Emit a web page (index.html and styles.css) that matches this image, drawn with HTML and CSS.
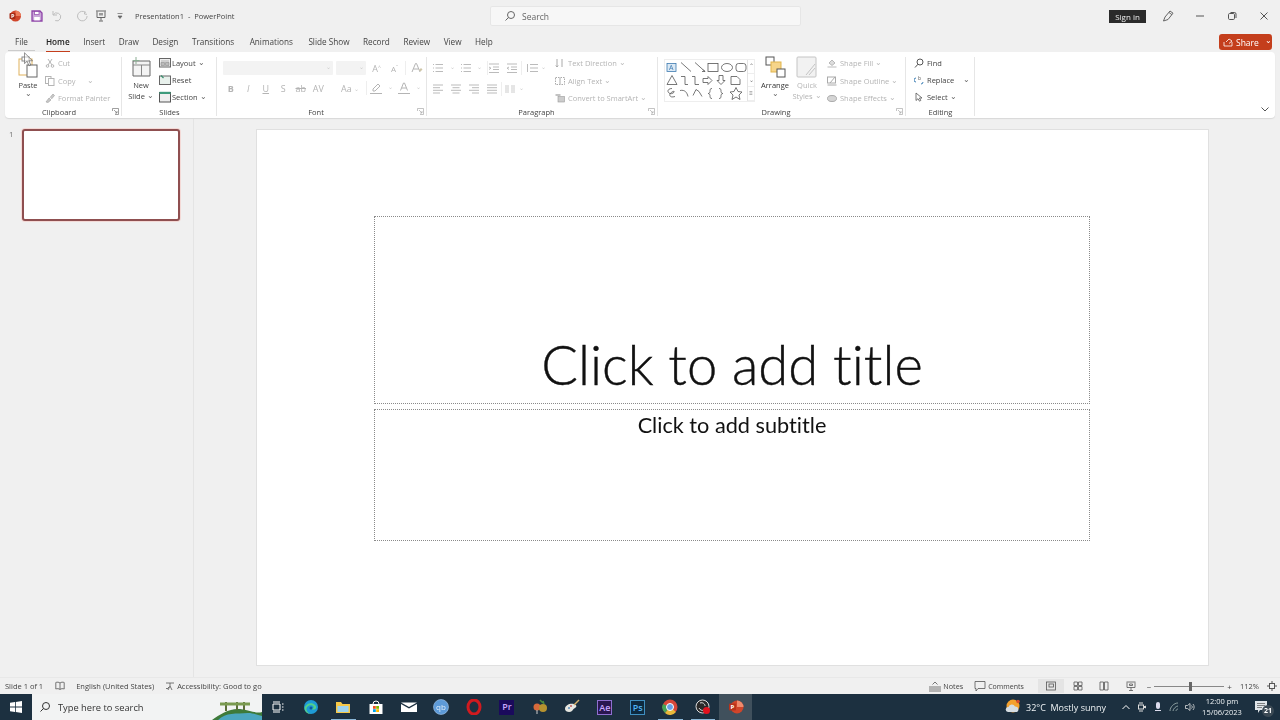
FILE: index.html
```html
<!DOCTYPE html>
<html lang="en">
<head>
<meta charset="utf-8">
<title>Presentation1 - PowerPoint</title>
<link rel="stylesheet" href="styles.css">
</head>
<body>
<div class="app">
<svg class="cursor" viewBox="0 0 10 16"><path d="M.5.5v12l3-2.500 2 5 2-.8-2-4.800h4z" fill="#fff" fill-opacity=".5" stroke="#666" stroke-width=".8"/></svg>
<header class="titlebar">
  <div class="qat">
    <svg class="ic14 q-logo" viewBox="0 0 14 14"><circle cx="7.5" cy="7" r="5.5" fill="#d0452a"/><path d="M7.5 1.5a5.5 5.5 0 0 1 5.5 5.5H7.5z" fill="#ed7d5a"/><rect x="1.5" y="4" width="6" height="6" rx="1" fill="#a62b14"/><text x="2.9" y="9" font-size="5.5" fill="#fff" font-family="Open Sans" font-weight="700">P</text></svg>
    <svg class="ic14 q-save" viewBox="0 0 14 14"><path d="M2 2h8l2 2v8H2z" fill="#c9a6d8" stroke="#8e44a8" stroke-width="1.3"/><rect x="4.5" y="2.6" width="4.5" height="3" fill="#fff" stroke="#8e44a8" stroke-width=".7"/><rect x="4.2" y="8" width="5.6" height="3.4" fill="#fff"/></svg>
    <svg class="ic14 q-undo" viewBox="0 0 14 14"><path d="M3 2v4h4M3.2 6a4 4 0 1 1 2 5.6" fill="none" stroke="#bdbdbd" stroke-width="1"/></svg>
    <svg class="ic14 q-redo" viewBox="0 0 14 14"><path d="M10 2.4 9.4 5l2.6.3M10.6 3.6a4.8 4.8 0 1 0 1.5 3.4" fill="none" stroke="#bdbdbd" stroke-width="1"/></svg>
    <svg class="ic14 q-pres" viewBox="0 0 14 14"><path d="M2 2h10M3 2.500v6h8v-6M7 8.500v3M5 12h4" fill="none" stroke="#666" stroke-width="1"/><rect x="5" y="4" width="4" height="2.500" fill="#999"/></svg>
    <svg class="ic8 q-more" viewBox="0 0 8 8"><path d="M1.500 1.500h5M2 4h4l-2 2.500z" fill="#666" stroke="#666" stroke-width=".7"/></svg>
    <span class="doc-title">Presentation1 &nbsp;-&nbsp; PowerPoint</span>
  </div>
  <div class="searchbox">
    <svg class="ic12" viewBox="0 0 12 12"><circle cx="7" cy="5" r="3.500" fill="none" stroke="#666"/><path d="M4.500 7.500 1.500 10.500" stroke="#666"/></svg>
    <span>Search</span>
  </div>
  <div class="win">
    <span class="signin">Sign in</span>
    <svg class="ic14 w-pen" viewBox="0 0 14 14"><path d="M2.500 12 4 8l5-6 3 2.200-5 6.300z" fill="none" stroke="#555" stroke-width=".9"/><path d="M8 3.500l3 2.200" stroke="#555" stroke-width=".8"/></svg>
    <svg class="ic10 w-btn" viewBox="0 0 10 10"><path d="M1 5h8" stroke="#555"/></svg>
    <svg class="ic10 w-btn" viewBox="0 0 10 10"><rect x="1.500" y="2.500" width="6" height="6" rx="1.200" fill="none" stroke="#555"/><path d="M3.500 1.500h4a1.500 1.500 0 0 1 1.500 1.500v4" fill="none" stroke="#555"/></svg>
    <svg class="ic10 w-btn" viewBox="0 0 10 10"><path d="M1.500 1.500l7 7m0-7l-7 7" stroke="#555"/></svg>
  </div>
</header>

<nav class="tabs">
  <span class="tab t-file">File</span>
  <span class="tab active">Home</span>
  <span class="tab">Insert</span>
  <span class="tab">Draw</span>
  <span class="tab">Design</span>
  <span class="tab wide">Transitions</span>
  <span class="tab wide">Animations</span>
  <span class="tab">Slide Show</span>
  <span class="tab">Record</span>
  <span class="tab">Review</span>
  <span class="tab">View</span>
  <span class="tab">Help</span>
  <div class="share">
    <svg class="ic10" viewBox="0 0 10 10"><path d="M1 5v4h8V5M3 5l3-3 3 2-3 2.500" fill="none" stroke="#fff" stroke-width=".8"/></svg>
    <span>Share</span><span class="share-c">⌄</span>
  </div>
</nav>

<section class="ribbon">
  <div class="grp g-clip">
    <div class="gbody clip-body">
      <div class="big paste">
        <svg class="ic22" viewBox="0 0 22 22"><rect x="2" y="3" width="13" height="16" fill="#fff" stroke="#e0b25c"/><rect x="5" y="1" width="7" height="4" fill="#fff" stroke="#8a8a8a"/><rect x="10" y="9" width="10" height="12" fill="#fff" stroke="#666"/></svg>
        <span>Paste</span><span class="chev">⌄</span>
      </div>
      <div class="stack dis">
        <div class="row"><svg class="ic10" viewBox="0 0 10 10"><path d="M3 1l4 6M7 1 3 7" stroke="#b5b5b5"/><circle cx="2.500" cy="8" r="1.300" fill="none" stroke="#b5b5b5"/><circle cx="7.500" cy="8" r="1.300" fill="none" stroke="#b5b5b5"/></svg><span>Cut</span></div>
        <div class="row"><svg class="ic10" viewBox="0 0 10 10"><rect x=".5" y=".5" width="5.500" height="7" fill="none" stroke="#b5b5b5"/><rect x="3.500" y="2.500" width="5.500" height="7" fill="#fff" stroke="#b5b5b5"/></svg><span>Copy</span><span class="chev mid">⌄</span></div>
        <div class="row"><svg class="ic10" viewBox="0 0 10 10"><path d="M1 9 4 5l2 2-3 2.500zM5 4.500 8 1l1.500 1.500L6.500 6" fill="#c8c8c8" stroke="#a8a8a8" stroke-width=".7"/></svg><span>Format Painter</span></div>
      </div>
    </div>
    <div class="glabel">Clipboard</div>
    <svg class="launch" viewBox="0 0 7 7"><path d="M.5 3V.5h6v6H3M2 2l3 3M5 3v2H3" fill="none" stroke="#777" stroke-width=".7"/></svg>
  </div>

  <div class="grp g-slides">
    <div class="gbody slides-body">
      <div class="big newslide">
        <svg class="ic22" viewBox="0 0 22 22"><path d="M3 5h17v15H3z" fill="#f4f4f4" stroke="#666"/><path d="M3 9h17M11.500 9v11" stroke="#888"/><path d="M6 1v7M2.500 4.500h7" stroke="#8cae94"/></svg>
        <span>New</span><span>Slide <i class="chev">⌄</i></span>
      </div>
      <div class="stack">
        <div class="row"><svg class="ic12" viewBox="0 0 12 12"><rect x=".5" y="1.500" width="11" height="8.500" fill="#eee" stroke="#666"/><path d="M2 4h8M2 5.500h3.500v3H2zM6.500 5.500H10v3H6.500z" fill="#bbb" stroke="#888" stroke-width=".6"/></svg><span>Layout <i class="chev">⌄</i></span></div>
        <div class="row"><svg class="ic12" viewBox="0 0 12 12"><rect x=".5" y="2" width="11" height="8.500" fill="#e8f1ec" stroke="#666"/><path d="M2 1.500 4.500 4" stroke="#3a8f6e" stroke-width="1.200"/></svg><span>Reset</span></div>
        <div class="row"><svg class="ic12" viewBox="0 0 12 12"><rect x=".5" y="1.500" width="11" height="9.500" fill="#eee" stroke="#555"/><rect x=".5" y=".8" width="11" height="2.200" fill="#3d9a7b"/></svg><span>Section <i class="chev">⌄</i></span></div>
      </div>
    </div>
    <div class="glabel">Slides</div>
  </div>

  <div class="grp g-font">
    <div class="gbody font-body">
      <div class="frow fr1">
        <div class="combo c-name"><i class="chev">⌄</i></div><div class="combo c-size"><i class="chev">⌄</i></div>
        <span class="gl g-a1">A<sup>^</sup></span><span class="gl g-a2">A<sup>ˇ</sup></span><span class="vsep"></span>
        <svg class="ic12 g-clear" viewBox="0 0 12 12"><path d="M1 10 4.500 1.500h1L9 10M2.500 7h5" fill="none" stroke="#b4b4b4"/><path d="M8 8l2-2 1.500 1.500-2 2z" fill="#cfc6a8"/></svg>
      </div>
      <div class="frow fr2">
        <b class="gl w18">B</b><i class="gl w18">I</i><u class="gl w18">U</u><span class="gl w18">S</span><s class="gl w18">ab</s><span class="gl w18 g-av">AV</span><span class="gl w28 g-aa">Aa <em class="chev">⌄</em></span><span class="vsep2"></span>
        <svg class="ic14 g-hl" viewBox="0 0 14 14"><path d="M4 8l5-5 2 2-5 5H4zM1 12.500h12" fill="none" stroke="#b4b4b4"/></svg>
        <i class="chev fchev">⌄</i>
        <svg class="ic14" viewBox="0 0 14 14"><path d="M3.500 9.500 6.500 2h1l3 7.500M4.700 7h4.600" fill="none" stroke="#b4b4b4"/><path d="M1 12.500h12" stroke="#b4b4b4"/></svg>
        <i class="chev fchev">⌄</i>
      </div>
    </div>
    <div class="glabel">Font</div>
    <svg class="launch" viewBox="0 0 7 7"><path d="M.5 3V.5h6v6H3M2 2l3 3M5 3v2H3" fill="none" stroke="#aaa" stroke-width=".7"/></svg>
  </div>

  <div class="grp g-para">
    <div class="gbody para-body">
      <div class="pleft">
        <div class="picons">
          <svg class="ic12" viewBox="0 0 12 12"><path d="M3.500 2.500H11M3.500 6H11M3.500 9.500H11M1 2.500h1M1 6h1M1 9.500h1" stroke="#bbb"/></svg><i class="chev pch">⌄</i>
          <svg class="ic12" viewBox="0 0 12 12"><path d="M3.500 2.500H11M3.500 6H11M3.500 9.500H11M1 2.500h1M1 6h1M1 9.500h1" stroke="#bbb"/></svg><i class="chev pch pch2">⌄</i><span class="psep"></span>
          <svg class="ic12 pw18" viewBox="0 0 12 12"><path d="M1 2h10M5 5h6M5 7.500h6M1 10.500h10M1 5l2 1.200-2 1.200" fill="none" stroke="#bbb"/></svg>
          <svg class="ic12 pw-i2" viewBox="0 0 12 12"><path d="M1 2h10M5 5h6M5 7.500h6M1 10.500h10M3 5 1 6.200l2 1.200" fill="none" stroke="#bbb"/></svg><span class="psep"></span>
          <svg class="ic12 pw-ls" viewBox="0 0 12 12"><path d="M4 2.500h8M4 6h8M4 9.500h8M1.500 2v8" stroke="#bbb"/></svg><i class="chev pch3">⌄</i>
        </div>
        <div class="picons">
          <svg class="ic12 pw18" viewBox="0 0 12 12"><path d="M1 2h10M1 4.700h7M1 7.300h10M1 10h7" stroke="#bbb"/></svg>
          <svg class="ic12 pw18" viewBox="0 0 12 12"><path d="M1 2h10M2.500 4.700h7M1 7.300h10M2.500 10h7" stroke="#bbb"/></svg>
          <svg class="ic12 pw18" viewBox="0 0 12 12"><path d="M1 2h10M4 4.700h7M1 7.300h10M4 10h7" stroke="#bbb"/></svg>
          <svg class="ic12 pw-i2" viewBox="0 0 12 12"><path d="M1 2h10M1 4.700h10M1 7.300h10M1 10h10" stroke="#bbb"/></svg><span class="psep"></span>
          <svg class="ic12 pw-col" viewBox="0 0 12 12"><path d="M1 3h4M1 5h4M1 7h4M1 9h4M7 3h4M7 5h4M7 7h4M7 9h4" stroke="#ccc"/></svg><i class="chev pch3">⌄</i>
        </div>
      </div>
      <div class="stack dis pright">
        <div class="row"><svg class="ic10" viewBox="0 0 10 10"><path d="M2 1v8M.8 7.500 2 9l1.200-1.500M7 1v8" fill="none" stroke="#aaa"/></svg><span>Text Direction <i class="chev">⌄</i></span></div>
        <div class="row"><svg class="ic10" viewBox="0 0 10 10"><rect x=".5" y="1.500" width="9" height="7" fill="none" stroke="#aaa" stroke-dasharray="1.500 1"/><path d="M5 2v6" stroke="#aaa"/></svg><span>Align Text <i class="chev">⌄</i></span></div>
        <div class="row"><svg class="ic10" viewBox="0 0 10 10"><rect x="3" y="3.500" width="6.500" height="5.500" fill="#ccc" stroke="#999" stroke-width=".6"/><path d="M.5 2h5" stroke="#aaa" stroke-width="1.400"/></svg><span>Convert to SmartArt <i class="chev">⌄</i></span></div>
      </div>
    </div>
    <div class="glabel">Paragraph</div>
    <svg class="launch" viewBox="0 0 7 7"><path d="M.5 3V.5h6v6H3M2 2l3 3M5 3v2H3" fill="none" stroke="#aaa" stroke-width=".7"/></svg>
  </div>

  <div class="grp g-draw">
    <div class="gbody draw-body">
      <div class="gallery">
        <svg class="shapes" viewBox="0 0 82 40">
          <g fill="none" stroke="#555" stroke-width=".8">
            <rect x="2" y="3" width="9" height="8" fill="#dbe9f5" stroke="#3d7ab0"/>
            <path d="M16 2l10 9M30 2l10 9M38 9l2 2-3 0"/>
            <rect x="43" y="3" width="10" height="8"/><ellipse cx="62" cy="7" rx="5.500" ry="4"/><rect x="71" y="3" width="10" height="8" rx="2.500"/>
            <path d="M7 15l5 9H2zM16 16h4v8h3M27 16h3v8h4M38 18h5v-2l4 4-4 4v-2h-5zM54 15h4v5h2l-4 4-4-4h2zM66 16h6l3 3v5h-9z"/>
            <path d="M7 28c-5 0-5 4-2 5 3 1 6-3 3-2-5 2-4 7 2 5M15 30c5-1 7 2 8 6M28 35l3-6 3 2 3 5M47 28c-2 0-2 1-2 3 0 2-2 2-2 2 0 0 2 0 2 2s0 3 2 3M54 28c2 0 2 1 2 3 0 2 2 2 2 2s-2 0-2 2 0 3-2 3"/>
            <path d="M71 27l2 4 4 .5-3 3 1 4.500-4-2.500-4 2.500 1-4.500-3-3 4-.5z"/>
          </g>
          <text x="4" y="9.800" font-size="7" fill="#3d7ab0" font-family="Open Sans">A</text>
        </svg>
        <div class="gal-btns"><span>⌃</span><span>⌄</span><span>≡</span></div>
      </div>
      <div class="big arrange">
        <svg class="ic22" viewBox="0 0 22 22"><rect x="2" y="1" width="8" height="8" fill="#fff" stroke="#555"/><rect x="7" y="6" width="10" height="10" fill="#f6d58a" stroke="#e2b54c"/><rect x="13" y="13" width="8" height="8" fill="#fff" stroke="#555"/></svg>
        <span>Arrange</span><span class="chev">⌄</span>
      </div>
      <div class="big quick dis">
        <svg class="ic22" viewBox="0 0 22 22"><rect x="1" y="1" width="19" height="20" rx="1" fill="#f2f2f2" stroke="#c4c4c4"/><path d="M10 19l9-11M13 19l6-7" stroke="#c4c4c4" fill="none"/></svg>
        <span>Quick</span><span>Styles <i class="chev">⌄</i></span>
      </div>
      <div class="stack dis sstack">
        <div class="row"><svg class="ic10" viewBox="0 0 10 10"><path d="M2 5l3-3 3 3-3 2.500zM.5 9h9" fill="#ddd" stroke="#aaa" stroke-width=".8"/></svg><span>Shape Fill <i class="chev">⌄</i></span></div>
        <div class="row"><svg class="ic10" viewBox="0 0 10 10"><rect x=".5" y="1" width="8" height="6" fill="none" stroke="#aaa"/><path d="M3 7l5-6M.5 9h9" stroke="#aaa"/></svg><span>Shape Outline <i class="chev">⌄</i></span></div>
        <div class="row"><svg class="ic10" viewBox="0 0 10 10"><ellipse cx="5" cy="5.500" rx="4.500" ry="3" fill="#d5d5d5" stroke="#aaa"/></svg><span>Shape Effects <i class="chev">⌄</i></span></div>
      </div>
    </div>
    <div class="glabel">Drawing</div>
    <svg class="launch" viewBox="0 0 7 7"><path d="M.5 3V.5h6v6H3M2 2l3 3M5 3v2H3" fill="none" stroke="#aaa" stroke-width=".7"/></svg>
  </div>

  <div class="grp g-edit">
    <div class="gbody edit-body">
      <div class="stack">
        <div class="row"><svg class="ic10" viewBox="0 0 10 10"><circle cx="6" cy="4" r="3" fill="none" stroke="#555"/><path d="M4 6.200 1 9.500" stroke="#555"/></svg><span>Find</span></div>
        <div class="row"><svg class="ic10" viewBox="0 0 10 10"><path d="M2 3a2 2 0 0 0 0 4M9 7a2 2 0 0 1-2 2" fill="none" stroke="#3c7fb5"/><text x="4" y="5" font-size="5" fill="#555" font-family="Open Sans">b</text></svg><span>Replace</span><span class="chev far">⌄</span></div>
        <div class="row"><svg class="ic10" viewBox="0 0 10 10"><path d="M2 1v7.500l2-1.800 1.500 2.500 1.300-.8L5.400 6H8z" fill="#fff" stroke="#555" stroke-width=".8"/></svg><span>Select <i class="chev">⌄</i></span></div>
      </div>
    </div>
    <div class="glabel">Editing</div>
  </div>
  <svg class="collapse" viewBox="0 0 8 5"><path d="M.5.500 4 4 7.500.5" fill="none" stroke="#555"/></svg>
</section>

<main class="workspace">
  <aside class="thumbs">
    <span class="tnum">1</span>
    <div class="thumb"></div>
  </aside>
  <div class="stage">
    <div class="slide">
      <div class="ph ph-title"><span>Click to add title</span></div>
      <div class="ph ph-sub"><span>Click to add subtitle</span></div>
    </div>
  </div>
</main>

<footer class="status">
  <span class="s-slide">Slide 1 of 1</span>
  <svg class="ic10 s-note" viewBox="0 0 10 10"><path d="M5 2C4 1 2 1 .8 1.500v6.500C2 7.500 4 7.500 5 8.500 6 7.500 8 7.500 9.200 8V1.500C8 1 6 1 5 2zM5 2v6.500" fill="none" stroke="#555" stroke-width=".8"/></svg>
  <span class="s-lang">English (United States)</span>
  <svg class="ic10 s-acc" viewBox="0 0 10 10"><path d="M1 2h8M5 2v3L3 9M5 5l2 4M1 7l1 1 2-2" fill="none" stroke="#555" stroke-width=".8"/></svg>
  <span class="s-good">Accessibility: Good to go</span>
  <div class="s-right">
    <svg class="ic12" viewBox="0 0 12 12"><path d="M0 7h12M0 9h12M0 11h12M3.500 4.500 6 2l2.500 2.500" fill="none" stroke="#555" stroke-width=".8"/></svg><span class="s-notes">Notes</span>
    <svg class="ic12 s-cicon" viewBox="0 0 12 12"><path d="M1 1.500h10v7H4L2 11V8.500H1z" fill="none" stroke="#555" stroke-width=".8"/></svg><span class="s-comments">Comments</span>
    <span class="view on"><svg class="ic10" viewBox="0 0 10 10"><rect x=".5" y="1" width="9" height="8" fill="none" stroke="#555" stroke-width=".8"/><rect x="3" y="3" width="4.500" height="3" fill="none" stroke="#555" stroke-width=".8"/></svg></span>
    <span class="view"><svg class="ic10" viewBox="0 0 10 10"><path d="M1 1h3.500v3.500H1zM5.500 1H9v3.500H5.500zM1 5.500h3.500V9H1zM5.500 5.500H9V9H5.500z" fill="none" stroke="#555" stroke-width=".8"/></svg></span>
    <span class="view"><svg class="ic10" viewBox="0 0 10 10"><path d="M1 1h3.500v8H1zM5.500 1H9v8H5.500z" fill="none" stroke="#555" stroke-width=".8"/></svg></span>
    <span class="view"><svg class="ic10" viewBox="0 0 10 10"><path d="M.5 1h9M1 1.500v5h8v-5M5 6.500v3M3 9.500h4M3.500 3h3v1.500h-3z" fill="none" stroke="#555" stroke-width=".8"/></svg></span>
    <div class="zoom"><span class="z-pm">−</span><div class="z-track"><i class="z-thumb"></i></div><span class="z-pm">+</span></div>
    <span class="z-val">112%</span>
    <svg class="ic10 s-fit" viewBox="0 0 10 10"><rect x="2.500" y="2.500" width="5" height="5" fill="none" stroke="#555"/><path d="M5 0v2M5 8v2M0 5h2M8 5h2" stroke="#555"/></svg>
  </div>
</footer>

<div class="taskbar">
  <div class="start"><svg class="ic12" viewBox="0 0 12 12"><path d="M0 1.700 5 1v4.600H0zM5.800.9 12 0v5.600H5.800zM0 6.400h5V11l-5-.7zM5.800 6.400H12V12l-6.200-.9z" fill="#fff"/></svg></div>
  <div class="tsearch">
    <svg class="ic12" viewBox="0 0 12 12"><circle cx="7" cy="5" r="3.500" fill="none" stroke="#333"/><path d="M4.500 7.500 1.500 10.500" stroke="#333"/></svg>
    <span class="ts-text">Type here to search</span>
    <svg class="ts-art" viewBox="0 0 50 18"><path d="M0 18C8 12 18 6 28 7c10 1 16 5 22 3v8z" fill="#3e7a3a"/><path d="M6 18c8-8 18-6 30-7 5 0 10 2 14 3v4z" fill="#4ba6bf"/><path d="M14 0v9M25 0v8M32 0v8" stroke="#5c6e3a" stroke-width="2"/><path d="M8 2h30" stroke="#7a9a50" stroke-width="3"/></svg>
  </div>
  <div class="apps">
    <span class="app-i"><svg class="ic12" viewBox="0 0 12 12"><path d="M1 3h7v6H1zM10 3h1.500M10 6h1.500M10 9h1.500M1 1h7M1 11h7" fill="none" stroke="#fff"/></svg></span>
    <span class="app-i"><svg class="ic16" viewBox="0 0 16 16"><circle cx="8" cy="8" r="7" fill="#1e9ad6"/><path d="M1.500 9C3 4 9 3 12 6c1.500 1.500 2 4-1 4.500-2 .2-3-.5-3-1.500 2 1 3 0 2.500-1.500C9 5 3 6 3.500 11c.5 2.500 3 3.500 4.500 4-4 0-6.500-3-6.500-6z" fill="#52d08a"/><circle cx="8" cy="9" r="1.500" fill="#0e5a9e"/></svg></span>
    <span class="app-i ul"><svg class="ic16" viewBox="0 0 16 16"><path d="M1 3h5l1.500 2H15v9H1z" fill="#f7c846"/><rect x="2.500" y="7" width="11" height="6" fill="#9fd4ee"/></svg></span>
    <span class="app-i"><svg class="ic16" viewBox="0 0 16 16"><path d="M1.500 5h13v10h-13z" fill="#fff"/><path d="M5 5a3 3 0 0 1 6 0" fill="none" stroke="#fff"/><rect x="5" y="7" width="2.800" height="2.800" fill="#f25022"/><rect x="8.200" y="7" width="2.800" height="2.800" fill="#7fba00"/><rect x="5" y="10.200" width="2.800" height="2.800" fill="#00a4ef"/><rect x="8.200" y="10.200" width="2.800" height="2.800" fill="#ffb900"/></svg></span>
    <span class="app-i"><svg class="ic16" viewBox="0 0 16 16"><path d="M0 3.500h16L8 8z" fill="#fff"/><path d="M0 5v8h16V5L8 9.500z" fill="#fff"/></svg></span>
    <span class="app-i"><svg class="ic16" viewBox="0 0 16 16"><circle cx="8" cy="8" r="7.500" fill="#5d9ad8" stroke="#a6c8ec" stroke-width=".6"/><text x="8" y="10.800" text-anchor="middle" font-size="8" fill="#dcebf9" font-family="Open Sans">qb</text></svg></span>
    <span class="app-i"><svg class="ic16" viewBox="0 0 16 16"><ellipse cx="8" cy="8" rx="6" ry="7" fill="none" stroke="#d11a1f" stroke-width="3"/></svg></span>
    <span class="app-i"><b class="adobe pr">Pr</b></span>
    <span class="app-i"><svg class="ic16" viewBox="0 0 16 16"><circle cx="5" cy="8" r="3.500" fill="#d76a3b"/><circle cx="11" cy="9" r="4" fill="#b6922f"/><path d="M8 1l3 3M11 2l1 3" stroke="#4c8b3e" stroke-width="1.500"/><path d="M5 11v4" stroke="#ccc"/></svg></span>
    <span class="app-i"><svg class="ic16" viewBox="0 0 16 16"><path d="M1 10c0-4 5-6 9-5 3 1 3 3 1 4-2 .8-2 2-3 3-2 2-7 1-7-2z" fill="#e6e6e0"/><path d="M10 6l5-5" stroke="#d6b06a" stroke-width="1.500"/><circle cx="5" cy="9" r="1" fill="#5a8fc0"/><circle cx="7" cy="7" r="1" fill="#c05a5a"/></svg></span>
    <span class="app-i"><b class="adobe ae">Ae</b></span>
    <span class="app-i"><b class="adobe ps">Ps</b></span>
    <span class="app-i ul"><svg class="ic16" viewBox="0 0 16 16"><circle cx="8" cy="8" r="7.500" fill="#d8473a"/><path d="M8 8 14 13A7.500 7.500 0 0 1 3 14z" fill="#e8b93a"/><path d="M8 8 3 14A7.500 7.500 0 0 1 1 5z" fill="#47a356"/><circle cx="8" cy="8" r="3.500" fill="#6aa0e6" stroke="#fff"/></svg></span>
    <span class="app-i ul"><svg class="ic16" viewBox="0 0 16 16"><circle cx="7.500" cy="7.500" r="6.500" fill="#2a2a2a" stroke="#ddd"/><path d="M5 4c3-1 5 1 5 3M4 9c1 2 3 3 5 2" fill="none" stroke="#ddd"/><circle cx="11.500" cy="11.500" r="3.500" fill="#e3121e"/></svg></span>
    <span class="app-i cur"><svg class="ic16" viewBox="0 0 16 16"><circle cx="9" cy="8" r="6.500" fill="#d0452a"/><path d="M9 1.500A6.500 6.500 0 0 1 15.500 8H9z" fill="#f08a6c"/><rect x="1" y="4.500" width="7" height="7" rx="1" fill="#b8321a"/><text x="2.600" y="10" font-size="6" fill="#fff" font-family="Open Sans" font-weight="700">P</text></svg></span>
  </div>
  <div class="tray">
    <svg class="ic16 t-wx" viewBox="0 0 16 16"><circle cx="8" cy="7" r="6.500" fill="#f4a12e"/><circle cx="13" cy="2.500" r="1.800" fill="#d94c2c"/><path d="M3 13a2.500 2.500 0 0 1 .5-5 3.500 3.500 0 0 1 6.500-.5A3 3 0 0 1 12 13z" fill="#d6dde2"/></svg>
    <span class="t-temp">32°C &nbsp;Mostly sunny</span>
    <svg class="ic10 t-up" viewBox="0 0 10 10"><path d="M1.500 7 5 3.500 8.500 7" fill="none" stroke="#fff"/></svg>
    <svg class="ic10 t-s" viewBox="0 0 10 10"><rect x="1.500" y="3" width="5" height="4" fill="none" stroke="#ddd"/><path d="M6.500 5l2-1v2zM2 1h4M2 9h4" stroke="#ddd"/></svg>
    <svg class="ic10 t-s" viewBox="0 0 10 10"><rect x="3" y="0" width="4" height="7" rx="2" fill="#dde"/><path d="M2 8.500h6" stroke="#dde"/></svg>
    <svg class="ic10 t-s" viewBox="0 0 10 10"><path d="M1 9c0-4 4-8 8-8M4 9c0-2 3-5 5-5M7 9c0-1 1-2 2-2" fill="none" stroke="#9aa" stroke-width=".9"/></svg>
    <svg class="ic10 t-s" viewBox="0 0 10 10"><path d="M.5 3.500h2L5 1.500v7l-2.500-2h-2zM6.500 3.500c1 1 1 2 0 3M8 2c1.500 2 1.500 4 0 6" fill="none" stroke="#ddd" stroke-width=".8"/></svg>
    <div class="clock"><span>12:00 pm</span><span>15/06/2023</span></div>
    <div class="notif"><svg class="ic14" viewBox="0 0 14 14"><path d="M1 1h12v9H6l-2 3v-3H1z" fill="#dfe5e9"/><path d="M3 3.500h8M3 5.500h8M3 7.500h5" stroke="#555" stroke-width=".7"/></svg><span class="n-badge">21</span></div>
  </div>
</div>
</div>
</body>
</html>
```
FILE: styles.css
```css
* { box-sizing: border-box; }
html, body { margin: 0; padding: 0; }
body { width: 1280px; height: 720px; overflow: hidden; background: #f0f0f0; font-family: "Open Sans", "Noto Sans", sans-serif; color: #444; }
svg { display: block; flex: none; }
.app { width: 1280px; height: 720px; display: flex; flex-direction: column; filter: blur(.35px); position: relative; }
.cursor { position: absolute; left: 24px; top: 52px; width: 9px; height: 15px; z-index: 5; }
.ic8 { width: 8px; height: 8px; }
.ic10 { width: 10px; height: 10px; }
.ic12 { width: 12px; height: 12px; }
.ic14 { width: 14px; height: 14px; }
.ic16 { width: 16px; height: 16px; }
.ic22 { width: 22px; height: 22px; }

/* title bar */
.titlebar { height: 32px; display: flex; align-items: center; flex: none; }
.qat { width: 490px; display: flex; align-items: center; padding-left: 8px; }
.q-save { margin-left: 8px; }
.q-undo { margin-left: 6px; }
.q-redo { margin-left: 11px; }
.q-pres { margin-left: 5px; }
.q-more { margin-left: 8px; }
.doc-title { margin-left: 11px; font-size: 7.500px; color: #444; white-space: nowrap; }
.searchbox { width: 311px; height: 20px; display: flex; align-items: center; gap: 6px; padding-left: 13px; background: #f7f7f7; border: 1px solid #e6e6e6; border-radius: 2px; font-size: 8.500px; color: #666; }
.win { flex: 1; display: flex; align-items: center; padding-left: 308px; }
.signin { width: 37px; height: 13px; background: #2a2a2a; color: #eee; font-size: 8px; line-height: 13px; text-align: center; }
.w-pen { margin-left: 15px; }
.w-btn { margin-left: 22px; }
.w-pen + .w-btn { margin-left: 20px; }

/* tabs */
.tabs { height: 20px; display: flex; align-items: center; flex: none; padding-left: 15px; font-size: 8.200px; color: #444; }
.tab { margin-right: 13.500px; white-space: nowrap; height: 20px; line-height: 20px; position: relative; }
.wide { margin-right: 15.500px; }
.t-file { margin-right: 18px; }
.t-file::after { content: ""; position: absolute; left: -7px; right: -7px; bottom: 1px; height: 1px; background: #ccc; }
.active { color: #222; font-weight: 600; }
.active::after { content: ""; position: absolute; left: 0; right: 0; bottom: 0; height: 1.500px; background: #c43e1c; }
.share { margin-left: auto; margin-right: 8px; width: 53px; height: 16px; background: #c43e1c; border-radius: 3px; color: #fff; font-size: 8.500px; display: flex; align-items: center; padding-left: 4px; gap: 3px; }
.share-c { margin-left: 3px; font-size: 8px; line-height: 8px; margin-top: -4px; }

/* ribbon */
.ribbon { margin: 0 5px; height: 66px; flex: none; background: #fff; border-radius: 4px; box-shadow: 0 1px 1px #d8d8d8; display: flex; position: relative; font-size: 7.500px; color: #444; font-variant-ligatures: none; }
.grp { position: relative; display: flex; flex-direction: column; height: 100%; padding-top: 4px; }
.grp::after { content: ""; position: absolute; right: 0; top: 5px; bottom: 2px; width: 1px; background: #e6e6e6; }
.gbody { height: 51px; display: flex; }
.glabel { text-align: center; font-size: 7.500px; color: #444; line-height: 10px; height: 10px; }
.launch { position: absolute; right: 3px; bottom: 3px; width: 7px; height: 7px; }
.g-clip { width: 117px; }
.g-clip .glabel { padding-right: 9px; }
.g-slides { width: 95px; }
.g-font { width: 210px; }
.g-para { width: 231px; }
.g-draw { width: 248px; }
.g-font .glabel, .g-para .glabel, .g-draw .glabel { padding-right: 12px; }
.g-edit { width: 69px; }
.chev { font-style: normal; font-size: 7.500px; line-height: 6px; display: inline-block; transform: translateY(-1px); color: #666; }
.big { display: flex; flex-direction: column; align-items: center; line-height: 11px; }
.big .ic22 { margin-bottom: 2px; }
.stack { display: flex; flex-direction: column; gap: 5px; padding-top: 1px; }
.stack.dis { gap: 5.500px; }
.row { height: 12px; display: flex; align-items: center; gap: 3px; white-space: nowrap; }
.slides-body .row { gap: 1px; }
.dis { color: #b4b4b4; }
.dis .chev { color: #bbb; }
.paste { width: 36px; margin-left: 5px; }
.clip-body .stack { margin-left: -1px; }
.mid { margin-left: 8px; }
.newslide { width: 30px; margin-left: 4px; }
.slides-body .stack { margin-left: 3px; }
.font-body { flex-direction: column; padding-left: 6px; }
.frow { display: flex; align-items: center; }
.fr1 { height: 14px; margin-top: 5px; gap: 3px; }
.fr2 { margin-top: 6px; height: 14px; margin-left: -1px; }
.combo { height: 14px; background: #f3f3f3; border-radius: 1px; flex: none; display: flex; justify-content: flex-end; align-items: center; padding-right: 2px; }
.combo .chev { color: #ccc; font-size: 6px; }
.c-name { width: 110px; }
.c-size { width: 30px; }
.gl { color: #b4b4b4; font-size: 9px; text-align: center; font-style: normal; font-weight: 400; flex: none; white-space: nowrap; }
.gl sup { font-size: 5px; vertical-align: 3px; line-height: 0; }
.g-a1, .g-a2 { width: 15px; }
.g-a2 { font-size: 8px; }
.vsep { width: 1px; height: 14px; background: #eee; }
.g-clear { margin-left: 2px; }
.w18 { width: 17.500px; }
.w28 { width: 28px; }
.fr2 i.gl { font-style: italic; }
.fr2 b { font-weight: 700; }
.g-aa { margin-left: 5px; text-align: left; padding-left: 9px; }
.gl .chev { color: #ccc; font-size: 6px; }
.vsep2 { width: 1px; height: 14px; background: #eee; margin-left: 6px; }
.g-hl { margin-left: 2px; }
.fchev { width: 14px; text-align: center; color: #ccc; font-size: 6px; }
.para-body { padding-left: 5px; }
.pleft { width: 123px; display: flex; flex-direction: column; gap: 9px; padding-top: 6px; flex: none; }
.picons { display: flex; align-items: center; height: 12px; }
.pch { width: 16px; text-align: center; color: #ccc; font-size: 6px; }
.pch2 { width: 15px; }
.pch3 { margin-left: 3px; color: #ccc; font-size: 6px; }
.psep { width: 1px; height: 14px; background: #eee; flex: none; }
.pw18 { margin-right: 6px; }
.pw-i2 { margin-right: 3px; }
.pw-ls { margin-left: 4px; }
.pw-col { margin-left: 2px; }
.draw-body { padding-left: 6px; }
.gallery { width: 91px; height: 43px; margin-top: 3px; display: flex; border: 1px solid #eee; flex: none; }
.shapes { width: 82px; height: 41px; }
.gal-btns { flex: 1; display: flex; flex-direction: column; border-left: 1px solid #e4e4e4; font-size: 6px; line-height: 13px; text-align: center; color: #777; }
.gal-btns span { height: 13.600px; border-bottom: 1px solid #eee; }
.arrange { width: 32px; margin-left: 4px; color: #333; }
.quick { width: 30px; margin-left: 1px; }
.sstack { margin-left: 5px; }
.edit-body { padding-left: 8px; }
.far { margin-left: 6px; }
.collapse { position: absolute; right: 6px; bottom: 6px; width: 8px; height: 5px; }

/* workspace */
.workspace { flex: 1; display: flex; min-height: 0; border-bottom: 1px solid #e8e8e8; }
.thumbs { width: 194px; padding: 11px 0 0 9px; display: flex; gap: 8px; border-right: 1px solid #e4e4e4; align-items: flex-start; }
.tnum { font-size: 8px; color: #777; line-height: 10px; }
.thumb { width: 158px; height: 92px; background: #fff; border: 2px solid #8f4f50; border-radius: 3px; box-shadow: 0 0 0 1px #f3d9d6; flex: none; }
.stage { flex: 1; padding: 11px 0 0 62px; }
.slide { width: 953px; height: 537px; background: #fff; border: 1px solid #e0e0e0; padding: 86px 0 0 117px; display: flex; flex-direction: column; }
.ph { width: 716px; border: 1px dotted #8a8a8a; font-family: Lato, "Open Sans", sans-serif; color: #111; text-align: center; flex: none; font-variant-ligatures: none; }
.ph-title { height: 188px; display: flex; align-items: flex-end; justify-content: center; font-size: 54.400px; font-weight: 300; line-height: 66px; padding-bottom: 6px; -webkit-text-stroke: .4px #111; }
.ph-sub { height: 132px; margin-top: 5px; font-size: 21.700px; line-height: 30px; }

/* status bar */
.status { height: 16px; flex: none; display: flex; align-items: center; font-size: 7.500px; color: #444; padding-left: 5px; white-space: nowrap; }
.s-note { margin-left: 12px; }
.s-lang { margin-left: 11px; }
.s-acc { margin-left: 11px; }
.s-good { margin-left: 2px; }
.s-right { margin-left: auto; display: flex; align-items: center; padding-right: 3px; }
.s-notes { margin-left: 2px; font-size: 7.200px; }
.s-cicon { margin-left: 11px; }
.s-comments { margin-left: 2px; margin-right: 14px; font-size: 7px; }
.view { width: 26.500px; height: 14px; display: flex; align-items: center; justify-content: center; }
.view.on { background: #e4e4e4; }
.zoom { display: flex; align-items: center; margin-left: 3px; gap: 3px; }
.z-pm { font-size: 8px; }
.z-track { width: 70px; height: 1px; background: #888; position: relative; }
.z-thumb { position: absolute; left: 35px; top: -4px; width: 3px; height: 9px; background: #666; }
.z-val { margin-left: 8px; }
.s-fit { margin-left: 8px; }

/* taskbar */
.taskbar { height: 26px; flex: none; background: #1c3040; display: flex; align-items: center; color: #fff; }
.start { width: 32px; height: 26px; display: flex; align-items: center; justify-content: center; }
.tsearch { width: 230px; height: 26px; background: #f2f3f3; display: flex; align-items: center; padding-left: 7px; color: #333; font-size: 9.300px; }
.ts-text { margin-left: 7px; white-space: nowrap; }
.ts-art { margin-left: auto; width: 50px; height: 18px; align-self: flex-end; }
.apps { display: flex; margin-left: -.3px; }
.app-i { width: 32.700px; height: 26px; display: flex; align-items: center; justify-content: center; position: relative; }
.ul::after { content: ""; position: absolute; left: 4px; right: 4px; bottom: 0; height: 1.500px; background: #8bb8d8; }
.cur { background: #40505c; }
.adobe { width: 15px; height: 15px; font-size: 9px; line-height: 14px; text-align: center; font-weight: 600; display: block; }
.pr { background: #1a0a5c; color: #c9a8ff; }
.ae { background: #2a1650; color: #c9a8ff; border: 1px solid #8f6fd0; }
.ps { background: #0d2a40; color: #51b4f5; border: 1px solid #3f8fc0; }
.tray { margin-left: auto; display: flex; align-items: center; font-size: 9px; white-space: nowrap; }
.t-temp { margin-left: 5px; color: #eef2f4; }
.t-up { margin-left: 15px; }
.t-s { margin-left: 6px; }
.clock { width: 40px; margin-left: 7px; display: flex; flex-direction: column; align-items: center; font-size: 7.500px; line-height: 11px; color: #eef2f4; }
.notif { width: 38px; height: 26px; display: flex; align-items: center; justify-content: center; position: relative; }
.n-badge { position: absolute; right: 6px; bottom: 3px; width: 12px; height: 12px; border-radius: 50%; background: #3c4a55; font-size: 7px; line-height: 12px; text-align: center; font-weight: 700; }
```
